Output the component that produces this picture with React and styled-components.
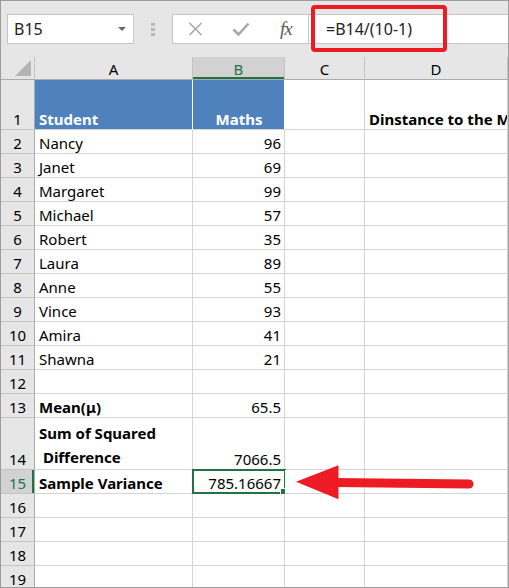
import React from 'react'
import styled, { createGlobalStyle, css } from 'styled-components'

const GlobalStyle = createGlobalStyle`
    html, body {
        margin: 0;
        padding: 0;
        background: #ffffff;
        overflow: hidden;
    }
    * {
        box-sizing: border-box;
    }
`

const green = '#217346'
const gridLine = '#d4d4d4'
const headerBg = '#e6e6e6'
const headerLine = '#c4c4c4'
const cols = '34px 158px 92px 80px 1fr'

const Frame = styled.div`
    position: relative;
    width: 509px;
    height: 588px;
    border: 1px solid #9c9c9c;
    overflow: hidden;
    background: #ffffff;
    font-family: "Noto Sans", "Open Sans", sans-serif;
    color: #000000;
`

const Toolbar = styled.div`
    height: 56px;
    background: ${headerBg};
    display: flex;
    align-items: flex-start;
    padding: 13px 0 0 6px;
`

const NameBox = styled.div`
    width: 127px;
    height: 30px;
    background: #ffffff;
    border: 1px solid #c6c6c6;
    display: flex;
    align-items: center;
    justify-content: space-between;
    padding: 0 7px 0 6px;
    font-size: 16px;
    color: #222222;
`

const Caret = styled.span`
    width: 0;
    height: 0;
    border-left: 4px solid transparent;
    border-right: 4px solid transparent;
    border-top: 4px solid #666666;
`

const Grip = styled.div`
    width: 38px;
    height: 30px;
    display: flex;
    flex-direction: column;
    align-items: center;
    justify-content: center;
    gap: 2px;

    span {
        width: 4px;
        height: 3px;
        background: #b8b8b8;
    }
`

const FxBox = styled.div`
    width: 137px;
    height: 30px;
    background: #ffffff;
    border: 1px solid #c6c6c6;
    display: flex;
    align-items: center;
    padding-left: 15px;
    gap: 29px;
`

const Fx = styled.span`
    font-family: "Liberation Serif", serif;
    font-style: italic;
    font-size: 19px;
    color: #5a5a5a;
    margin-left: 1px;
    letter-spacing: -1px;
`

const FormulaInput = styled.div`
    flex: 1;
    height: 30px;
    background: #ffffff;
    border: 1px solid #c6c6c6;
    border-right: none;
    border-left: none;
    display: flex;
    align-items: center;
    padding-left: 17px;
    font-size: 16px;
    color: #222222;
`

const RedBox = styled.div`
    position: absolute;
    left: 310px;
    top: 4px;
    width: 136px;
    height: 47px;
    border: 4px solid #ed1c24;
    border-radius: 4px;
`

const Row = styled.div`
    display: grid;
    grid-template-columns: ${cols};
    height: ${p => p.h || 24}px;
`

const ColHead = styled.div`
    background: ${p => (p.active ? '#d2d2d2' : headerBg)};
    color: ${p => (p.active ? green : '#000000')};
    border-right: 1px solid ${headerLine};
    border-bottom: 1px solid #ababab;
    display: flex;
    align-items: center;
    justify-content: center;
    font-size: 15px;
    padding-top: 1px;
    ${p => p.active && css`
        box-shadow: inset 0 -2px 0 ${green};
    `}
`

const Corner = styled(ColHead)`
    position: relative;

    &::after {
        content: '';
        position: absolute;
        right: 3px;
        bottom: 3px;
        width: 0;
        height: 0;
        border-left: 16px solid transparent;
        border-bottom: 16px solid #b4b4b4;
    }
`

const RowHead = styled.div`
    background: ${p => (p.active ? '#d2d2d2' : headerBg)};
    color: ${p => (p.active ? green : '#000000')};
    border-right: 1px solid #ababab;
    border-bottom: 1px solid ${headerLine};
    display: flex;
    align-items: flex-end;
    justify-content: center;
    font-size: 15px;
    line-height: 20px;
    ${p => p.active && css`
        box-shadow: inset -2px 0 0 ${green};
    `}
`

const Cell = styled.div`
    position: relative;
    border-right: 1px solid ${p => (p.fill ? '#ffffff' : gridLine)};
    border-bottom: 1px solid ${gridLine};
    background: ${p => (p.fill ? '#4f81bd' : '#ffffff')};
    color: ${p => (p.fill ? '#ffffff' : '#000000')};
    font-weight: ${p => (p.bold ? 700 : 400)};
    font-size: 15px;
    line-height: ${p => (p.wrap ? 24 : 20)}px;
    display: flex;
    flex-direction: column;
    justify-content: flex-end;
    align-items: ${p => (p.align === 'right' ? 'flex-end' : p.align === 'center' ? 'center' : 'flex-start')};
    padding: 0 3px ${p => (p.wrap ? 0 : 0)}px 4px;
    margin-bottom: 0;
    white-space: ${p => (p.wrap ? 'pre' : 'nowrap')};
    overflow: ${p => (p.spill ? 'visible' : 'hidden')};
    ${p => p.selected && css`
        &::before {
            content: '';
            position: absolute;
            left: -1px;
            top: -1px;
            right: -2px;
            bottom: -1px;
            border: 2px solid ${green};
        }
        &::after {
            content: '';
            position: absolute;
            right: -5px;
            bottom: -4px;
            width: 7px;
            height: 7px;
            background: ${green};
            border: 1px solid #ffffff;
        }
    `}
`

const Arrow = styled.svg`
    position: absolute;
    left: 290px;
    top: 458px;
`

const XIcon = () => (
    <svg width="15" height="14" viewBox="0 0 15 14">
        <path d="M1.5 1 L13.5 13 M13.5 1 L1.5 13" stroke="#a8a8a8" strokeWidth="1.6" fill="none" />
    </svg>
)

const CheckIcon = () => (
    <svg width="18" height="14" viewBox="0 0 18 14">
        <path d="M1.5 7.5 L6.5 12.5 L16.5 1.5" stroke="#a8a8a8" strokeWidth="2.6" fill="none" />
    </svg>
)

const names = ['Nancy', 'Janet', 'Margaret', 'Michael', 'Robert', 'Laura', 'Anne', 'Vince', 'Amira', 'Shawna']
const marks = [96, 69, 99, 57, 35, 89, 55, 93, 41, 21]

const Empty = () => (
    <>
        <Cell />
        <Cell />
    </>
)

export default function App() {
    return (
        <>
            <GlobalStyle />
            <Frame>
                <Toolbar>
                    <NameBox>
                        <span>B15</span>
                        <Caret />
                    </NameBox>
                    <Grip>
                        <span />
                        <span />
                        <span />
                    </Grip>
                    <FxBox>
                        <XIcon />
                        <CheckIcon />
                        <Fx>fx</Fx>
                    </FxBox>
                    <FormulaInput>=B14/(10-1)</FormulaInput>
                </Toolbar>

                <Row h={23}>
                    <Corner />
                    <ColHead>A</ColHead>
                    <ColHead active>B</ColHead>
                    <ColHead>C</ColHead>
                    <ColHead>D</ColHead>
                </Row>

                <Row h={50}>
                    <RowHead>1</RowHead>
                    <Cell fill bold>Student</Cell>
                    <Cell fill bold align="center">Maths</Cell>
                    <Cell />
                    <Cell bold>Dinstance to the Mean</Cell>
                </Row>

                {names.map((n, i) => (
                    <Row key={n}>
                        <RowHead>{i + 2}</RowHead>
                        <Cell>{n}</Cell>
                        <Cell align="right">{marks[i]}</Cell>
                        <Empty />
                    </Row>
                ))}

                <Row>
                    <RowHead>12</RowHead>
                    <Cell />
                    <Cell />
                    <Empty />
                </Row>

                <Row>
                    <RowHead>13</RowHead>
                    <Cell bold>Mean(μ)</Cell>
                    <Cell align="right">65.5</Cell>
                    <Empty />
                </Row>

                <Row h={52}>
                    <RowHead>14</RowHead>
                    <Cell bold wrap>{'Sum of Squared\n Difference'}</Cell>
                    <Cell align="right">7066.5</Cell>
                    <Empty />
                </Row>

                <Row>
                    <RowHead active>15</RowHead>
                    <Cell bold>Sample Variance</Cell>
                    <Cell align="right" selected spill>785.16667</Cell>
                    <Empty />
                </Row>

                {[16, 17, 18, 19].map(r => (
                    <Row key={r}>
                        <RowHead>{r}</RowHead>
                        <Cell />
                        <Cell />
                        <Empty />
                    </Row>
                ))}

                <RedBox />
                <Arrow width="190" height="46" viewBox="0 0 190 46">
                    <line x1="44" y1="23.5" x2="178" y2="25" stroke="#ed1c24" strokeWidth="9" strokeLinecap="round" />
                    <polygon points="5,22.7 47.5,6.3 47.5,40.3" fill="#ed1c24" />
                </Arrow>
            </Frame>
        </>
    )
}
